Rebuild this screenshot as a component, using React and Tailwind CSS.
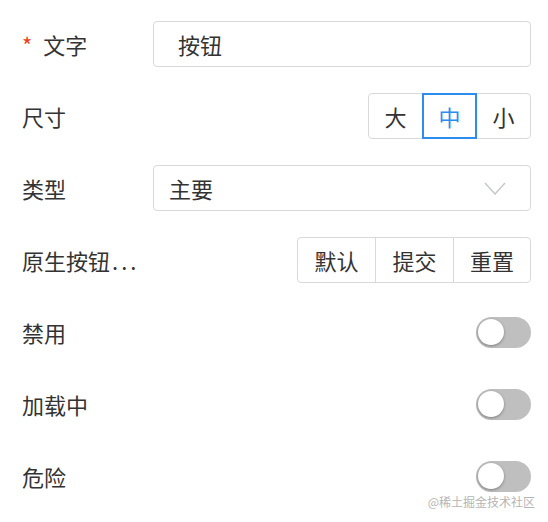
const Switch = () => (
  <div className="w-[55px] h-[31px] rounded-full bg-[#bfbfbf] flex items-center pl-[2px]">
    <div className="w-[26px] h-[26px] rounded-full bg-white shadow-[0_1px_3px_rgba(0,0,0,0.35)]" />
  </div>
);

const Row = ({ label, required, children }) => (
  <div className="h-[72px] flex items-center">
    <div className="w-[131px] shrink-0 flex items-center text-[22px] text-[#333] whitespace-nowrap">
      {required && <span className="text-[#ed4014] mr-[11px] text-[22px] leading-none">*</span>}
      {label}
    </div>
    <div className="flex-1 flex justify-end">{children}</div>
  </div>
);

const App = () => {
  return (
    <div
      className="relative w-[548px] h-[522px] bg-white pt-[8px] pl-[22px] pr-[17px] overflow-hidden"
      style={{ fontFamily: '"Noto Sans CJK SC", "Noto Sans", sans-serif' }}
    >
      <Row label="文字" required>
        <div className="w-full h-[46px] border border-[#d9d9d9] rounded-[4px] flex items-center pl-[24px] text-[22px] text-[#333]">
          按钮
        </div>
      </Row>
      <Row label="尺寸">
        <div className="flex h-[46px] border border-[#d9d9d9] rounded-[4px] text-[22px] text-[#333]">
          <div className="w-[53px] flex items-center justify-center">大</div>
          <div className="w-[55px] -my-px flex items-center justify-center border-2 border-[#2d8cf0] text-[#2d8cf0]">中</div>
          <div className="w-[53px] flex items-center justify-center">小</div>
        </div>
      </Row>
      <Row label="类型">
        <div className="w-full h-[46px] border border-[#d9d9d9] rounded-[4px] flex items-center justify-between pl-[15px] pr-[24px] text-[22px] text-[#333]">
          <span>主要</span>
          <svg width="22" height="13" viewBox="0 0 22 13" fill="none">
            <path d="M1 1 L11 12 L21 1" stroke="#c5c8ce" strokeWidth="1.5" />
          </svg>
        </div>
      </Row>
      <Row
        label={
          <>
            原生按钮<span className="tracking-[3px] ml-[2px]">...</span>
          </>
        }
      >
        <div className="flex h-[46px] border border-[#d9d9d9] rounded-[4px] text-[22px] text-[#333] divide-x divide-[#d9d9d9]">
          <div className="w-[78px] flex items-center justify-center">默认</div>
          <div className="w-[78px] flex items-center justify-center">提交</div>
          <div className="w-[76px] flex items-center justify-center">重置</div>
        </div>
      </Row>
      <Row label="禁用">
        <Switch />
      </Row>
      <Row label="加载中">
        <Switch />
      </Row>
      <Row label="危险">
        <Switch />
      </Row>
      <div className="absolute right-[13px] bottom-[14px] text-[12px] text-[#b5b5b5] leading-none">
        @稀土掘金技术社区
      </div>
    </div>
  );
};

export default App;
